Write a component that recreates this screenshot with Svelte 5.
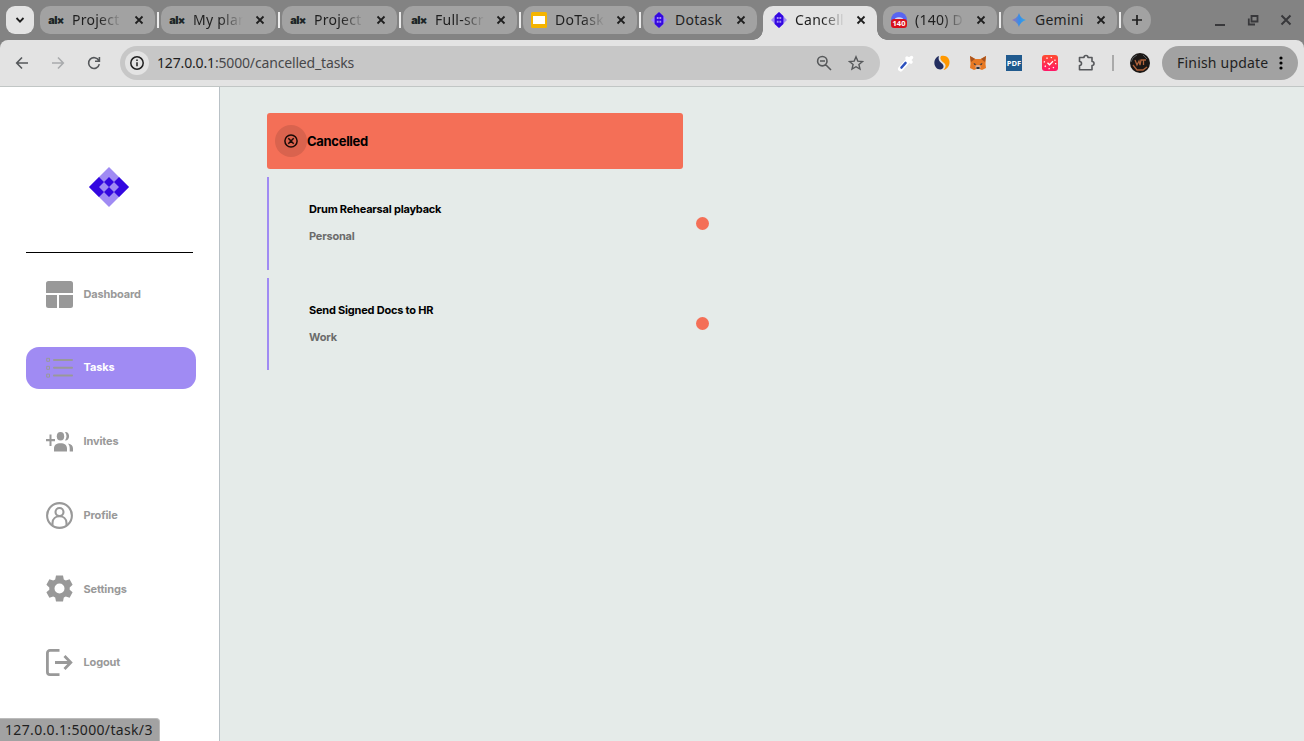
<script>
  const tabs = [
    { icon: 'alx', title: 'Project', w: 115 },
    { icon: 'alx', title: 'My plan', w: 115 },
    { icon: 'alx', title: 'Project', w: 115 },
    { icon: 'alx', title: 'Full-scr', w: 114 },
    { icon: 'slides', title: 'DoTask', w: 114 },
    { icon: 'dotask', title: 'Dotask', w: 114, nosep: true },
    { icon: 'dotask', title: 'Cancell', w: 114, active: true, nosep: true },
    { icon: 'discord', title: '(140) D', w: 114 },
    { icon: 'gemini', title: 'Gemini', w: 114 }
  ];
  const nav = ['Dashboard', 'Tasks', 'Invites', 'Profile', 'Settings', 'Logout'];
  const tasks = [
    { name: 'Drum Rehearsal playback', category: 'Personal' },
    { name: 'Send Signed Docs to HR', category: 'Work' }
  ];
</script>

{#snippet diamond(size, narrow)}
  <svg width={size} height={size} viewBox="0 0 40 40">
    <path fill="#a08bf3" d="M20 0 40 20 20 40 0 20Z" />
    {#if narrow}
      <path fill="#3408e0" d="M20 0 31 10V30L20 40 9 30V10Z" />
      <path fill="#a08bf3" d="M14.500 12.500h4.500v5h-4.500zM21 12.500h4.500v5H21zM14.500 22h4.500v5h-4.500zM21 22h4.500v5H21z" />
    {:else}
      <path fill="#3408e0" d="M0 20 10 10 15 15 10 20 15 25 10 30ZM40 20 30 10 25 15 30 20 25 25 30 30ZM20 10l5 5-5 5-5-5ZM20 20l5 5-5 5-5-5Z" />
    {/if}
  </svg>
{/snippet}

<div class="browser">
  <header class="strip">
    <button class="search" aria-label="Search tabs">
      <svg width="12" height="12" viewBox="0 0 12 12"><path d="m2.500 4 3.500 3.600L9.500 4" fill="none" stroke="#1f1f1f" stroke-width="1.800" /></svg>
    </button>
    {#each tabs as t}
      <div class="tab" class:active={t.active} style:width="{t.w}px">
        <span class="fav">
          {#if t.icon === 'alx'}
            <b class="alx">al<i>×</i></b>
          {:else if t.icon === 'slides'}
            <svg width="16" height="16"><rect width="16" height="16" rx="1.500" fill="#f5b400" /><rect x="2" y="4" width="12" height="8" fill="#fff" /></svg>
          {:else if t.icon === 'dotask'}
            {@render diamond(16, true)}
          {:else if t.icon === 'discord'}
            <svg width="16" height="16"><circle cx="8" cy="8" r="8" fill="#5865f2" /><path d="M4 6.500q4-2.500 8 0v3H4Z" fill="#d5d8f5" /><rect y="7" width="16" height="9" rx="3" fill="#d8101c" /><text x="8" y="14.300" text-anchor="middle" class="badge">140</text></svg>
          {:else}
            <svg width="16" height="16" viewBox="0 0 16 16"><defs><linearGradient id="gem"><stop offset="0" stop-color="#9a72b8" /><stop offset=".55" stop-color="#348ee8" /><stop offset="1" stop-color="#38a9e8" /></linearGradient></defs><path fill="url(#gem)" d="M8 1Q9.500 6.500 15 8 9.500 9.500 8 15 6.500 9.500 1 8 6.500 6.500 8 1Z" /></svg>
          {/if}
        </span>
        <span class="title" class:whole={t.title === 'Dotask' || t.title === 'Gemini'}>{t.title}</span>
        <svg class="close" width="10" height="10" viewBox="0 0 10 10"><path d="m1.500 1.500 7 7m0-7-7 7" stroke="#1f1f1f" stroke-width="1.800" /></svg>
      </div>
      <span class="sep" class:hidden={t.nosep}></span>
    {/each}
    <button class="plus" aria-label="New tab"><svg width="12" height="12"><path d="M6 1v10M1 6h10" stroke="#1f1f1f" stroke-width="1.700" /></svg></button>
    <div class="controls">
      <svg width="12" height="12"><path d="M1 11h10" stroke="#38383b" stroke-width="2" /></svg>
      <svg width="12" height="12"><path d="M4.500 2h6v5.500h-6ZM1.800 4.500v6H8" fill="none" stroke="#38383b" stroke-width="1.800" /></svg>
      <svg width="12" height="12"><path d="m1.500 1.500 9 9m0-9-9 9" stroke="#38383b" stroke-width="2" /></svg>
    </div>
  </header>

  <div class="under">
    <div class="toolbar">
      <div class="history">
        <svg width="16" height="16" viewBox="0 0 16 16"><path d="M14 8H3m5-5.500L2.700 8 8 13.500" fill="none" stroke="#55585b" stroke-width="1.600" /></svg>
        <svg width="16" height="16" viewBox="0 0 16 16"><path d="M2 8h11M8 2.500 13.300 8 8 13.500" fill="none" stroke="#a9abad" stroke-width="1.600" /></svg>
        <svg width="16" height="16" viewBox="0 0 16 16"><path d="M13.300 9.200A5.400 5.400 0 1 1 12.800 5.500M13.400 2v4.300H9" fill="none" stroke="#55585b" stroke-width="1.600" /></svg>
      </div>
      <div class="address">
        <span class="info"><svg width="16" height="16"><circle cx="8" cy="8" r="6.200" fill="none" stroke="#1f1f1f" stroke-width="1.500" /><path d="M8 7.200v4M8 4.400v1.600" stroke="#1f1f1f" stroke-width="1.500" /></svg></span>
        <span class="url"><b>127.0.0.1</b>:5000/cancelled_tasks</span>
        <svg width="16" height="16" viewBox="0 0 16 16"><path d="M9.500 9.500 15 15M4 6h5M11 6.200a4.700 4.700 0 1 1-9.400 0 4.700 4.700 0 0 1 9.400 0Z" fill="none" stroke="#57595b" stroke-width="1.600" /></svg>
        <svg class="star" width="16" height="16" viewBox="0 0 16 16"><path d="m8 1.800 1.800 4.300 4.700.4-3.600 3 1.100 4.600L8 11.700l-4 2.400 1.100-4.600-3.600-3 4.700-.4Z" fill="none" stroke="#57595b" stroke-width="1.400" /></svg>
      </div>
      <div class="ext">
        <svg width="18" height="18" viewBox="0 0 18 18"><path d="m3.500 15 8-9" stroke="#fff" stroke-width="5" stroke-linecap="round" /><path d="m10 4 4 4M12 6l2.500-2.500" stroke="#fff" stroke-width="3.500" stroke-linecap="round" /><path d="m4.500 13.500 4-4.500" stroke="#2b50bd" stroke-width="2.600" stroke-linecap="round" /></svg>
        <svg width="18" height="18" viewBox="0 0 18 18"><path fill="#232e60" d="M6 2C1 3.500 0 10 3 13.500c3 3.500 8 2 7.500-1.500C10 8.500 4 8 6 2Z" /><path fill="#ff9800" d="M8 2c5-1.500 9 2 8.500 7-.5 4-3 6.500-6 7 3-3.500 2.500-5.500 0-7.500C8 6.500 6.500 4.500 8 2Z" /></svg>
        <svg width="18" height="18" viewBox="0 0 18 18"><path fill="#e77924" d="m1 2 5.500 3h5L17 2l-.5 8 .5 4-4 2-2.500-1h-3L5 16l-4-2 .5-4Z" /><path fill="#a65320" d="m1 2 5 3-4 3ZM17 2l-5 3 4 3Z" /><path fill="#d5a68c" d="m6 13 1.500-2h3l1.500 2-1.500 2h-3Z" /><path fill="#233447" d="m4.500 9 3 1.200-2 .8Zm9 0-3 1.200 2 .8ZM7.500 13h3v2h-3Z" /></svg>
        <svg width="18" height="18"><rect x="1" y="1" width="16" height="16" fill="#205a8e" /><text x="9" y="11.700" text-anchor="middle" class="pdf">PDF</text></svg>
        <svg width="18" height="18" viewBox="0 0 18 18"><defs><linearGradient id="clk" x2="0" y2="1"><stop stop-color="#ff4c31" /><stop offset="1" stop-color="#ff1767" /></linearGradient></defs><rect x="1" y="1" width="16" height="16" rx="3" fill="url(#clk)" /><circle cx="9" cy="9" r="5.700" fill="none" stroke="#fff" stroke-width="1.300" stroke-dasharray="1.300 3.180" /><path d="m6.500 8.800 2 2 3.500-3.500" fill="none" stroke="#fff" stroke-width="1.300" /></svg>
        <svg width="18" height="18" viewBox="0 0 18 18"><path d="M2.500 3.500H7a2 2 0 0 1 4 0h4V7.500a2 2 0 0 1 0 4v4.300H2.500v-4.300a2 2 0 0 0 0-4Z" fill="none" stroke="#57595c" stroke-width="1.600" stroke-linejoin="round" /></svg>
      </div>
      <span class="rule"></span>
      <svg class="avatar" width="20" height="20" viewBox="0 0 20 20"><circle cx="10" cy="10" r="10" fill="#1b1715" /><path d="m5 7 2 5 2-4 1 4 1-5h5M13.500 7v5M3 12l4 5h6l4-3" fill="none" stroke="#ad623b" stroke-width="1.300" /><path d="M1 9q1-5 6-7M13 2l4 4" stroke="#555b5d" fill="none" /></svg>
      <button class="update"><span>Finish update</span><svg width="4" height="16"><circle cx="2" cy="3" r="1.600" /><circle cx="2" cy="8" r="1.600" /><circle cx="2" cy="13" r="1.600" /></svg></button>
    </div>
  </div>

  <div class="page">
    <aside>
      <div class="logo">{@render diamond(40, false)}</div>
      <nav>
        {#each nav as n}
          <a class:current={n === 'Tasks'} href="#{n}">
            <svg width="27" height="27" viewBox="0 0 27 27" fill="#999">
              {#if n === 'Dashboard'}
                <path d="M2.500 0h22A2.500 2.500 0 0 1 27 2.500V12H0V2.500A2.500 2.500 0 0 1 2.500 0ZM0 14h11v13H2.500A2.500 2.500 0 0 1 0 24.500ZM13 14h14v10.500a2.500 2.500 0 0 1-2.500 2.500H13Z" />
              {:else if n === 'Tasks'}
                <path d="M8 5.900h18M8 13.800h18M8 21.600h18" stroke="#999" stroke-width="2" stroke-linecap="round" /><path fill="none" stroke="#999" d="M.7 4.300h2.800v3H.7ZM.7 12.300h2.800v3H.7ZM.7 20.100h2.800v3H.7Z" />
              {:else if n === 'Invites'}
                <path d="M0 11h3.500V6.500h2V11H9v2.300H5.500V18h-2v-4.700H0ZM8 23.500v-3c0-3.500 2.500-5.300 6.500-5.300s6.500 1.800 6.500 5.300v3Z" /><ellipse cx="14.500" cy="8.300" rx="3.700" ry="4.300" /><path d="M19 4c5.500-.5 5.500 9 0 8.500 2-3 2-5.500 0-8.500ZM22 15.500c3.500.5 5 2.500 5 5v3h-3.300v-3c0-2-.5-3.500-1.700-5Z" />
              {:else if n === 'Profile'}
                <g fill="none" stroke="#999" stroke-width="2.100"><circle cx="13.500" cy="13.500" r="12.400" /><circle cx="13.500" cy="10" r="4" /><path d="M6.500 23.500v-2.500c0-9 14-9 14 0v2.500" /></g>
              {:else if n === 'Settings'}
                <path fill-rule="evenodd" d="M10 .5h7l.8 4 2 1.100 3.800-1.300 3 5.500-2.900 2.600v2.300l2.900 2.600-3 5.500-3.800-1.300-2 1.100-.8 4h-7l-.8-4-2-1.100-3.800 1.300-3-5.500 2.900-2.600v-2.300L.4 9.800l3-5.500 3.800 1.300 2-1.100ZM13.500 8.500a5 5 0 1 0 0 10 5 5 0 0 0 0-10Z" />
              {:else}
                <path d="M13.500 1.400H4A2.600 2.600 0 0 0 1.400 4v19A2.600 2.600 0 0 0 4 25.600h9.500M9 13.500h15.500M18.500 7l6.300 6.500-6.300 6.500" fill="none" stroke="#999" stroke-width="2.800" />
              {/if}
            </svg>
            <span>{n}</span>
          </a>
        {/each}
      </nav>
    </aside>
    <main>
      <div class="heading">
        <span class="disc"><svg width="14" height="14" viewBox="0 0 14 14"><path d="m4.300 4.300 5.400 5.400m0-5.400L4.300 9.700M13.100 7A6.100 6.100 0 1 1 .9 7a6.100 6.100 0 0 1 12.200 0Z" fill="none" stroke="#180a07" stroke-width="1.500" /></svg></span>
        <h1>Cancelled</h1>
      </div>
      {#each tasks as t}
        <div class="task">
          <div class="copy"><strong>{t.name}</strong><span>{t.category}</span></div>
          <i class="dot"></i>
        </div>
      {/each}
    </main>
    <div class="status">127.0.0.1:5000/task/3</div>
  </div>
</div>

<style>
  :global(body) { overflow: hidden; }
  * { box-sizing: border-box; }
  svg { display: block; flex: none; }
  button { border: 0; padding: 0; font: inherit; }
  .browser { width: 1304px; height: 741px; display: flex; flex-direction: column; font-family: "Noto Sans", "Open Sans", sans-serif; color: #1f1f1f; }
  .strip { height: 40px; flex: none; background: #838383; display: flex; align-items: flex-start; padding: 6px 12px 0 6px; }
  .search { width: 28px; height: 28px; border-radius: 9px; background: #e3e3e3; display: grid; place-items: center; margin-right: 6px; flex: none; }
  .tab { height: 28px; flex: none; border-radius: 10px; background: #a2a2a2; display: flex; align-items: center; padding: 0 11px 0 8px; position: relative; }
  .tab.active { height: 34px; background: #e3e3e3; border-radius: 10px 10px 0 0; padding-bottom: 6px; }
  .tab.active::before, .tab.active::after { content: ''; position: absolute; bottom: 0; width: 10px; height: 10px; }
  .tab.active::before { left: -10px; background: radial-gradient(circle at 0 0, transparent 9.500px, #e3e3e3 10px); }
  .tab.active::after { right: -10px; background: radial-gradient(circle at 100% 0, transparent 9.500px, #e3e3e3 10px); }
  .fav { width: 16px; height: 16px; display: grid; place-items: center; flex: none; }
  .alx { font: 900 11px/16px Inter, sans-serif; letter-spacing: -.7px; color: #1c2526; }
  .alx i { font-style: normal; }
  .badge { font: 700 7.500px "Open Sans", sans-serif; fill: #fff; }
  .title { width: 52px; margin-left: 8px; font-size: 14px; line-height: 20px; letter-spacing: .25px; white-space: nowrap; mask-image: linear-gradient(to right, #000 52%, transparent 96%); }
  .title.whole { mask-image: none; }
  .close { margin-left: auto; }
  .sep { width: 2px; height: 16px; margin: 6px 2px 0; background: #ececec; flex: none; }
  .sep.hidden { background: transparent; }
  .plus { width: 28px; height: 28px; border-radius: 50%; background: #a2a2a2; display: grid; place-items: center; flex: none; }
  .controls { display: flex; gap: 21px; margin: 8px 0 0 auto; }
  .under { background: #838383; flex: none; }
  .toolbar { height: 47px; background: #e3e3e3; border-radius: 8px 8px 0 0; border-bottom: 1px solid #c1c6c5; display: flex; align-items: center; padding: 0 6px 0 14px; }
  .history { display: flex; gap: 20px; width: 106px; }
  .address { width: 760px; height: 34px; border-radius: 17px; background: #c7c7c7; display: flex; align-items: center; padding: 0 16px 0 5px; }
  .info { width: 24px; height: 24px; border-radius: 50%; background: #e3e3e3; display: grid; place-items: center; }
  .url { flex: 1; margin-left: 8px; font-size: 14px; line-height: 20px; color: #47484a; letter-spacing: -.16px; }
  .url b { color: #1f1f1f; font-weight: 400; }
  .star { margin-left: 16px; }
  .ext { display: flex; gap: 18px; margin-left: 17px; }
  .pdf { font: 700 7.500px "Open Sans", sans-serif; fill: #fff; }
  .rule { width: 2px; height: 16px; background: #aaa; margin: 0 15px 0 17px; }
  .avatar { margin-left: 1px; margin-right: 12px; }
  .update { width: 136px; height: 34px; flex: none; border-radius: 17px; background: #a2a2a2; color: #1f1f1f; font-size: 14px; letter-spacing: .2px; display: flex; align-items: center; justify-content: space-between; padding: 0 15px 1px; white-space: nowrap; }
  .page { flex: 1; display: flex; position: relative; font-family: Inter, sans-serif; font-weight: 700; min-height: 0; }
  aside { width: 220px; background: #fff; border-right: 1px solid #b9c1c6; padding: 80px 23px 0 26px; }
  .logo { width: 167px; height: 86px; border-bottom: 1px solid #000; display: flex; justify-content: center; padding-right: 1px; }
  nav { display: flex; flex-direction: column; gap: 31.700px; padding-top: 20px; }
  nav a { width: 170px; height: 42px; padding-left: 20px; border-radius: 13px; display: flex; align-items: center; gap: 10.500px; color: #999; font-size: 11px; letter-spacing: -.14px; text-decoration: none; }
  .current { background: #a08bf3; color: #fff; }
  .current span { padding-bottom: 2px; }
  main { flex: 1; background: #e5ebe9; padding: 26px 47px; }
  .heading { width: 416px; height: 56px; border-radius: 3px; background: #f46f57; display: flex; align-items: center; padding-left: 8px; }
  .disc { width: 32px; height: 32px; border-radius: 50%; background: #d9634e; display: grid; place-items: center; }
  h1 { margin: 0; color: #000; font-size: 13px; font-weight: 700; letter-spacing: -.3px; }
  .task { width: 442px; height: 92.500px; margin-top: 8px; border-left: 2px solid #a08bf3; display: flex; align-items: center; justify-content: space-between; padding-left: 40px; }
  .copy { display: flex; flex-direction: column; gap: 13px; padding-bottom: 1.500px; font-size: 11px; line-height: 14px; letter-spacing: -.21px; color: #6b6b6b; }
  .copy strong { color: #000; font-weight: 700; }
  .dot { width: 13px; height: 13px; border-radius: 50%; background: #f46f57; }
  .status { position: absolute; left: 0; bottom: 0; width: 160px; height: 23px; background: #a2a2a2; border: 1px solid #bbb; border-width: 1px 1px 0 0; border-radius: 0 4px 0 0; padding-left: 5px; font: 400 14px/22px "Noto Sans", sans-serif; letter-spacing: .34px; white-space: nowrap; }
</style>
